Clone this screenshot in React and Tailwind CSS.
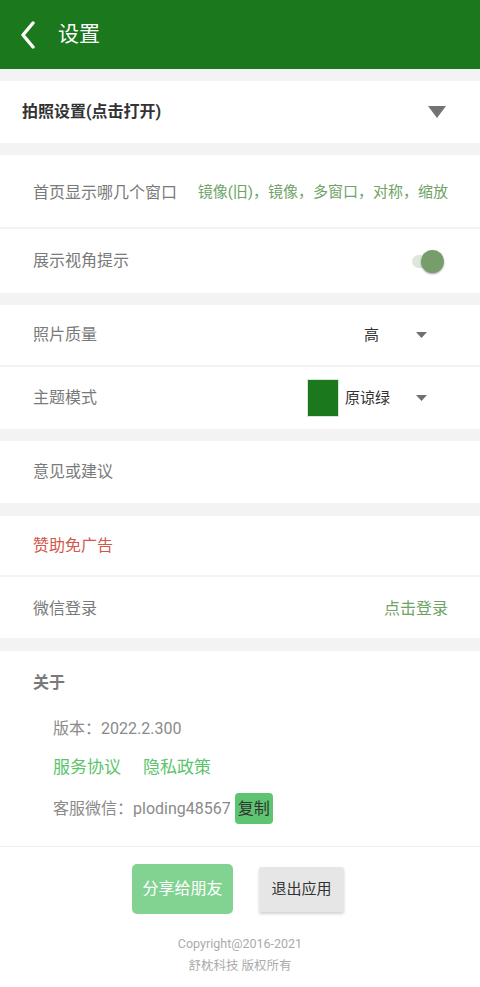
import React from 'react';

const font = { fontFamily: 'Roboto, "Noto Sans CJK SC", sans-serif' };

const Caret = () => (
  <svg width="11" height="7" viewBox="0 0 11 7" className="ml-[26px]">
    <path d="M0 0 L11 0 L5.5 6 Z" fill="#707070" />
  </svg>
);

const Row = ({ children, border = true, h = 'h-[62px]' }) => (
  <div className={`flex items-center ${h} pl-[33px] pr-[32px] bg-white ${border ? 'border-b-2 border-[#f3f3f3]' : ''}`}>
    {children}
  </div>
);

const Gap = ({ h = 'h-[12px]' }) => <div className={`${h} bg-[#f3f3f3]`} />;

export default function App() {
  return (
    <div className="w-[480px] min-h-[987px] bg-white" style={font}>
      {/* Header */}
      <div className="h-[69px] bg-[#1b781c] flex items-center">
        <svg width="16" height="28" viewBox="0 0 16 28" className="ml-[20px]">
          <path d="M13 2 L3 14 L13 26" stroke="white" strokeWidth="3.4" fill="none" strokeLinecap="round" strokeLinejoin="round" />
        </svg>
        <span className="ml-[22px] text-[21px] text-white leading-none">设置</span>
      </div>

      <Gap />
      <div className="h-[62px] bg-white flex items-center pl-[22px] pr-[34px]">
        <span className="text-[16px] font-bold text-[#333]">拍照设置(点击打开)</span>
        <svg width="18" height="12" viewBox="0 0 18 12" className="ml-auto">
          <path d="M0 0 L18 0 L9 12 Z" fill="#737373" />
        </svg>
      </div>
      <Gap />

      <Row h="h-[74px]">
        <span className="text-[16px] text-[#7a7a7a] pt-[3px]">首页显示哪几个窗口</span>
        <span className="ml-auto text-[15px] text-[#6fa366] pt-[3px]">镜像(旧)，镜像，多窗口，对称，缩放</span>
      </Row>
      <Row border={false} h="h-[64px]">
        <span className="text-[16px] text-[#7a7a7a]">展示视角提示</span>
        <div className="ml-auto relative w-[28px] h-[13px] mr-[8px]">
          <div className="absolute inset-0 rounded-full bg-[#dde8da]" />
          <div className="absolute right-[-4px] top-[-5px] w-[23px] h-[23px] rounded-full bg-[#779d6a] shadow-[0_1px_2px_rgba(0,0,0,0.35)]" />
        </div>
      </Row>
      <Gap />

      <Row>
        <span className="text-[16px] text-[#7a7a7a]">照片质量</span>
        <div className="ml-auto flex items-center mr-[21px]">
          <span className="text-[15px] text-[#333]">高</span>
          <span className="ml-[11px]"><Caret /></span>
        </div>
      </Row>
      <Row border={false}>
        <span className="text-[16px] text-[#7a7a7a]">主题模式</span>
        <div className="ml-auto flex items-center mr-[21px]">
          <div className="w-[32px] h-[38px] bg-[#1b781c] border border-[#d8e8d8]" />
          <span className="ml-[6px] text-[15px] text-[#333]">原谅绿</span>
          <Caret />
        </div>
      </Row>
      <Gap />

      <Row border={false}>
        <span className="text-[16px] text-[#7a7a7a]">意见或建议</span>
      </Row>
      <Gap h="h-[13px]" />

      <Row h="h-[61px]">
        <span className="text-[16px] text-[#d3574a]">赞助免广告</span>
      </Row>
      <Row border={false} h="h-[61px]">
        <span className="text-[16px] text-[#7a7a7a] pt-[2px]">微信登录</span>
        <span className="ml-auto text-[16px] text-[#6fa366] pt-[2px]">点击登录</span>
      </Row>
      <Gap h="h-[13px]" />

      {/* About */}
      <div className="pl-[33px] pt-[20px] pb-[22px] border-b border-[#f0f0f0]">
        <div className="text-[16px] font-bold text-[#7a7a7a]">关于</div>
        <div className="pl-[20px] mt-[22px] flex flex-col">
          <span className="text-[16px] text-[#8a8a8a] h-[24px] leading-[24px]">版本：2022.2.300</span>
          <div className="mt-[14px] flex text-[17px] text-[#5cc46c] h-[24px] leading-[24px]">
            <span>服务协议</span>
            <span className="ml-[22px]">隐私政策</span>
          </div>
          <div className="mt-[14px] flex items-center text-[16px] text-[#8a8a8a]">
            <span>客服微信：ploding48567</span>
            <span className="ml-[4px] px-[3px] h-[31px] leading-[31px] rounded-[4px] bg-[#5ec471] text-[#333]">复制</span>
          </div>
        </div>
      </div>

      {/* Buttons */}
      <div className="flex justify-center items-center pt-[17px] pr-[4px]">
        <button className="w-[101px] h-[50px] rounded-[5px] bg-[#82d392] text-white text-[16px]">分享给朋友</button>
        <button className="ml-[26px] w-[85px] h-[45px] rounded-[2px] bg-[#e6e6e6] text-[#333] text-[15px] shadow-[0_2px_3px_rgba(0,0,0,0.18)]">退出应用</button>
      </div>
      <div className="mt-[19px] flex flex-col items-center text-[12.5px] text-[#ababab] leading-[22px]">
        <span>Copyright@2016-2021</span>
        <span>舒枕科技 版权所有</span>
      </div>
    </div>
  );
}
